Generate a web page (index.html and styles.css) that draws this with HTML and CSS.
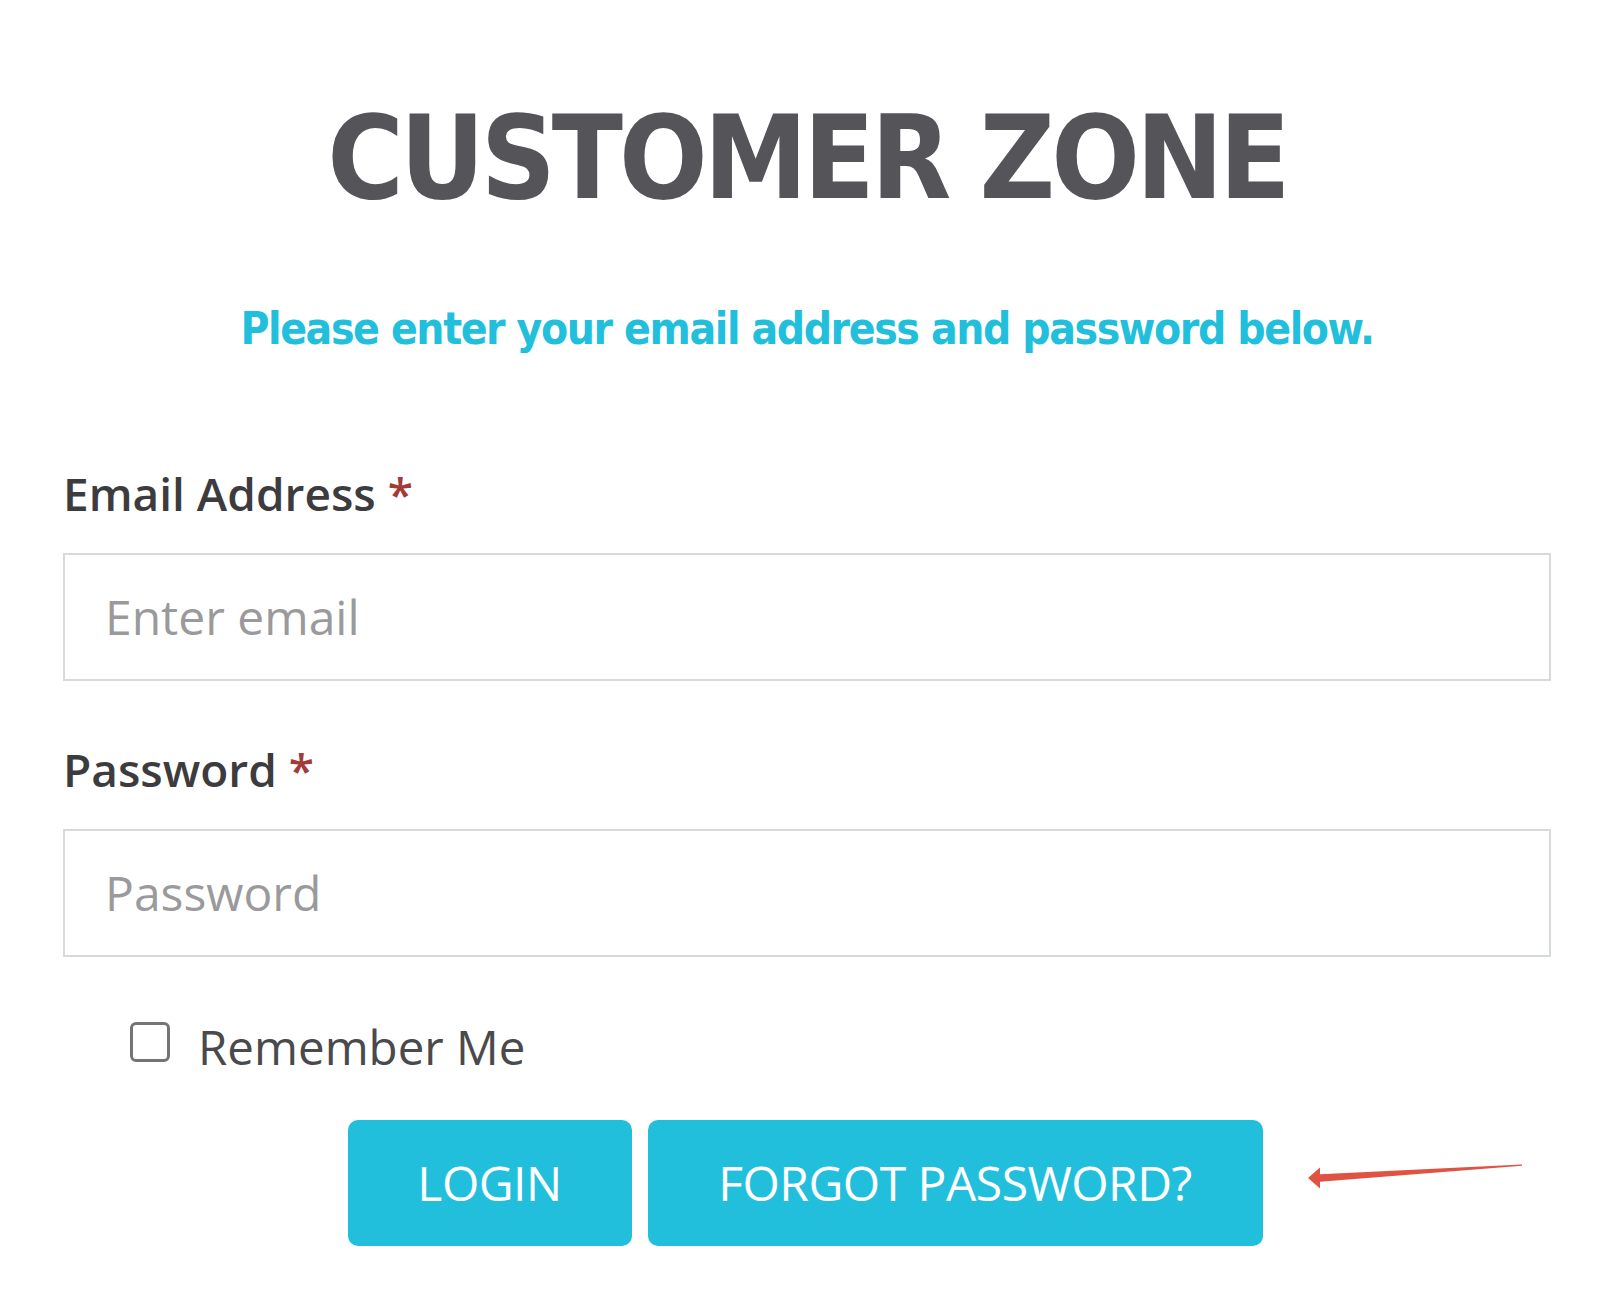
FILE: index.html
```html
<!DOCTYPE html>
<html lang="en">
<head>
<meta charset="utf-8">
<title>Customer Zone</title>
<link rel="stylesheet" href="styles.css">
</head>
<body>
<main class="page">
  <h1 class="title">CUSTOMER ZONE</h1>
  <p class="intro">Please enter your email address and password below.</p>
  <form class="form">
    <div class="field field-email">
      <label class="label" for="email">Email Address <span class="req">*</span></label>
      <input class="input" id="email" type="email" placeholder="Enter email">
    </div>
    <div class="field field-pass">
      <label class="label" for="pass">Password <span class="req">*</span></label>
      <input class="input" id="pass" type="password" placeholder="Password">
    </div>
    <label class="remember"><input class="check" type="checkbox"><span>Remember Me</span></label>
    <div class="actions">
      <button class="btn btn-login" type="button">LOGIN</button>
      <button class="btn btn-forgot" type="button">FORGOT PASSWORD?</button>
      <svg class="arrow" width="220" height="30" viewBox="0 0 220 30">
        <polygon points="216,2.4 14,12.3 14,5.5 2,16 14,26.5 14,19.8 216,3.8" fill="#e05342"/>
      </svg>
    </div>
  </form>
</main>
</body>
</html>
```

FILE: styles.css
```css
* { box-sizing: border-box; }
html, body { margin: 0; padding: 0; background: #ffffff; }
.page {
  width: 1617px;
  padding: 0 66px 0 63px;
}
.title {
  margin: 88px 0 0;
  text-align: center;
  font-family: "DejaVu Sans", sans-serif;
  font-stretch: condensed;
  font-weight: bold;
  font-size: 116px;
  line-height: 1.2;
  color: #555459;
  letter-spacing: -4px;
}
.intro {
  margin: 76px 0 0;
  text-align: center;
  font-family: "DejaVu Sans", sans-serif;
  font-stretch: condensed;
  font-weight: bold;
  font-size: 44px;
  line-height: 1.2;
  color: #22bfdd;
  letter-spacing: -1.4px;
}
.form { display: flex; flex-direction: column; margin-top: 107px; }
.field { display: flex; flex-direction: column; }
.field-pass { margin-top: 58px; }
.label {
  font-family: "Open Sans", sans-serif;
  font-weight: 600;
  font-size: 46px;
  line-height: 60px;
  color: #3c3c3e;
}
.req { color: #a33a3a; }
.input {
  margin-top: 30px;
  height: 128px;
  width: 100%;
  border: 2px solid #d6d9de;
  border-radius: 0;
  padding: 0 40px;
  font-family: "Open Sans", sans-serif;
  font-size: 48px;
  color: #444;
  background: #fff;
  outline: none;
}
.input::placeholder { color: #9a9a9c; }
.remember {
  display: flex;
  align-items: flex-start;
  gap: 28px;
  margin: 60px 0 0 67px;
  font-family: "Open Sans", sans-serif;
  font-size: 47.5px;
  line-height: 60px;
  color: #4a4a4c;
}
.check {
  appearance: none;
  -webkit-appearance: none;
  margin: 5px 0 0;
  width: 40px;
  height: 40px;
  border: 3px solid #747474;
  border-radius: 6px;
  background: #fff;
}
.actions {
  position: relative;
  display: flex;
  justify-content: center;
  gap: 16px;
  margin-top: 43px;
  padding-right: 4px;
}
.btn {
  height: 126px;
  border: none;
  border-radius: 10px;
  background: #22bfdd;
  color: #ffffff;
  font-family: "Open Sans", sans-serif;
  font-size: 48px;
  letter-spacing: -0.5px;
  padding: 0;
}
.btn-login { width: 284px; }
.btn-forgot { width: 615px; }
.arrow {
  position: absolute;
  left: 1243px;
  top: 42px;
}
```
